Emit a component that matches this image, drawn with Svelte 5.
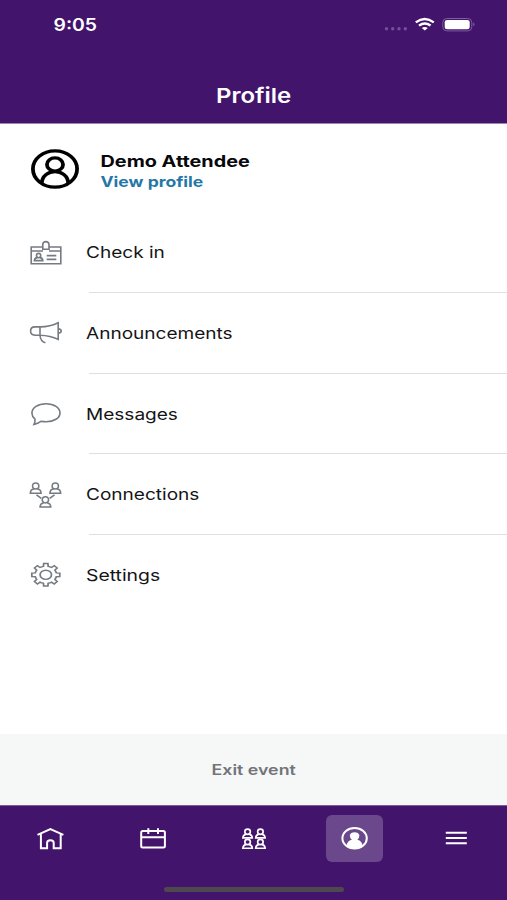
<script>
  const items = ['Check in', 'Announcements', 'Messages', 'Connections', 'Settings'];

  // Eight-toothed gear outline, centred on the origin
  const teeth = 8;
  const gear = Array.from({ length: teeth }, (_, i) => {
    const a = (i * 2 * Math.PI) / teeth;
    const pt = (r, d) => `${(r * Math.sin(a + d)).toFixed(2)} ${(-r * Math.cos(a + d)).toFixed(2)}`;
    return `${i ? 'L' : 'M'}${pt(8.7, -0.22)}L${pt(11.4, -0.15)}L${pt(11.4, 0.15)}L${pt(8.7, 0.22)}A8.7 8.7 0 0 1 ${pt(8.7, 0.565)}`;
  }).join('') + 'Z';
</script>

{#snippet person(x, y, w, h)}
  <g transform="translate({x} {y}) scale({w / 12} {h / 11})">
    <ellipse cx="0" cy="3.2" rx="3.4" ry="3.2" />
    <path d="M-2.4 5.6v.8Q-5.6 7-5.8 10.8H5.8Q5.6 7 2.4 6.4V5.6" />
  </g>
{/snippet}

<div class="screen">
  <header>
    <div class="status">
      <span class="time"><span class="wide">9:05</span></span>
      <svg width="94" height="18" viewBox="384 15 94 18">
        <g fill="#74509a">
          <circle cx="386.5" cy="28.7" r="1.7" /><circle cx="392.7" cy="28.7" r="1.7" />
          <circle cx="399" cy="28.7" r="1.7" /><circle cx="405.3" cy="28.7" r="1.7" />
        </g>
        <g fill="none" stroke="#fff" stroke-width="2.4">
          <path d="M415.8 22.4Q424.7 15.8 433.8 22.4" />
          <path d="M419 25.6Q424.7 21.4 430.6 25.6" />
        </g>
        <path d="M421.8 28Q424.7 25.8 427.8 28L424.8 30.6Z" fill="#fff" />
        <rect x="442.8" y="18.5" width="29" height="12.4" rx="4" fill="none" stroke="#7d5ca1" />
        <rect x="444.7" y="20" width="25" height="9.2" rx="2.3" fill="#fff" />
        <path d="M473.2 22.4q3 1.9 0 3.8z" fill="#7d5ca1" />
      </svg>
    </div>
    <h1><span class="wide">Profile</span></h1>
  </header>

  <main>
    <div class="profile">
      <svg width="50" height="42" viewBox="30.3 147.7 50 42" fill="none" stroke="#000">
        <g transform="translate(55.3 168.7) scale(1.22 1)" stroke-width="3.1">
          <circle r="18.1" />
          <circle cy="-4.5" r="6.6" />
          <path d="M-10.9 14.5C-10.5-1.4 10.5-1.4 10.9 14.5" />
        </g>
      </svg>
      <div class="who">
        <strong><span class="wide">Demo Attendee</span></strong>
        <a href="#profile"><span class="wide">View profile</span></a>
      </div>
    </div>

    <ul>
      {#each items as item, i}
        <li>
          <svg width="36" height="30" viewBox="28 {[237.4, 318, 398.6, 479.2, 559.8][i]} 36 30" fill="none" stroke="#757b82" stroke-width="1.6">
            {#if i === 0}
              <path d="M43 246.4H31.2V263.2H60.8V246.4H49M31.2 250.4H43M49 250.4H60.8M46.7 255H56.3M46.7 258.8H56.3" />
              <path d="M42.8 248.6V243.8Q43 241 45.9 241T49 243.8V248.6Z" />
              <ellipse cx="38.6" cy="255" rx="2.1" ry="2.2" />
              <path d="M37.4 257Q34.6 257.3 34.4 260H42.8Q42.6 257.3 39.8 257" />
            {:else if i === 1}
              <path d="M40 326.9H35Q30.6 327 30.6 331T35 335.2H40ZM40 326.9Q50.5 326.6 58.2 322.7V339.4Q50.5 335.5 40 335.2M58.2 328.8Q61.2 329 61.2 331T58.2 333.2" />
              <path d="M40 335.2Q40.4 341.4 45.4 342.7" />
            {:else if i === 2}
              <path d="M34 424Q35.3 421.5 35 418.8Q31.9 416 31.9 412.6C32 407.4 38 403.4 46 403.4S60 407.4 60 412.5S54 421.4 46 421.4Q43.4 421.4 41 420.9Q37.8 423.2 34 424Z" />
            {:else if i === 3}
              {@render person(35.7, 482.1, 11.2, 10.5)}
              {@render person(55.3, 482.1, 11.2, 10.5)}
              {@render person(45.4, 496, 11.2, 10.5)}
              <path d="M36.5 494L41.3 497.6M54.5 494L49.7 497.6" />
            {:else}
              <g transform="translate(45.8 574.6) scale(1.24 1)" stroke-width="1.4">
                <path d={gear} /><circle r="4.6" />
              </g>
            {/if}
          </svg>
          <span class="label"><span class="wide">{item}</span></span>
        </li>
      {/each}
    </ul>
  </main>

  <button class="exit"><span class="wide">Exit event</span></button>

  <nav>
    <div class="tabs">
      <div class="tab">
        <svg width="57" height="47" viewBox="22.3 815 57 47">
          <path d="M37.8 834.8L50.7 829.2L63.7 834.8M41.2 833.8V848.2H47.4V842.8Q47.4 840.2 50.7 840.2T54 842.8V848.2H61V833.8" />
        </svg>
      </div>
      <div class="tab">
        <svg width="57" height="47" viewBox="124.2 815 57 47">
          <rect x="141.4" y="831" width="23.7" height="16.5" rx="1.5" />
          <path d="M141.4 837.3H165.1M148.5 828.3V834M158.2 828.3V834" />
        </svg>
      </div>
      <div class="tab">
        <svg width="57" height="47" viewBox="225.2 815 57 47">
          <g class="people">
            {@render person(247.8, 829.1, 9.8, 9)}
            {@render person(260.6, 829.1, 9.8, 9)}
            {@render person(247.8, 839.4, 9.8, 9)}
            {@render person(260.6, 839.4, 9.8, 9)}
          </g>
        </svg>
      </div>
      <div class="tab active">
        <svg width="57" height="47" viewBox="326.2 815 57 47">
          <ellipse cx="354.8" cy="838.2" rx="12.2" ry="10.2" />
          <path class="solid" d="M346.8 845.9Q347 841 352 839.8Q350 838 350 835.5C350.2 831 359.4 831 359.6 835.5Q359.6 838 357.6 839.8Q362.4 841 362.8 845.9Q355 852 346.8 845.9Z" />
        </svg>
      </div>
      <div class="tab">
        <svg width="57" height="47" viewBox="427.9 815 57 47">
          <path d="M445.7 832.8H466.7M445.7 838.1H466.7M445.7 843.2H466.7" />
        </svg>
      </div>
    </div>
    <div class="indicator"></div>
  </nav>
</div>

<style>
  :global(body) { margin: 0; }
  .screen {
    width: 507px; height: 900px; display: flex; flex-direction: column;
    overflow: hidden; background: #fff; color: #141416;
    font-family: Inter, "Liberation Sans", sans-serif;
  }
  .wide { display: inline-block; white-space: nowrap; transform: scaleX(1.19); transform-origin: left; }
  header { height: 124px; flex: none; background: #43146b; color: #fff; border-bottom: 1px solid #9e86b2; box-sizing: border-box; }
  .status { height: 48px; display: flex; justify-content: space-between; align-items: center; padding: 0 29px 0 53px; }
  .time { font-size: 17px; font-weight: 600; padding-top: 2px; }
  .time .wide { transform: translateX(.5px) scaleX(1.14); }
  h1 { margin: 35px 0 0; font-size: 20.5px; line-height: 26px; font-weight: 600; text-align: center; }
  h1 .wide, .exit .wide { transform-origin: center; }
  h1 .wide { transform: translateX(.5px) scaleX(1.17); }
  .exit .wide { transform: translateX(.5px) scaleX(1.27); }
  main { flex: 1; }
  .profile { display: flex; align-items: center; height: 88.6px; padding: 1.2px 0 0 30px; box-sizing: border-box; gap: 20px; }
  .who { display: flex; flex-direction: column; line-height: 20px; padding-top: 5px; }
  strong { font-size: 16px; font-weight: 700; color: #08080a; }
  strong .wide { transform: translateX(.5px) scaleX(1.24); }
  a { font-size: 14.5px; font-weight: 700; color: #2477a6; text-decoration: none; }
  a .wide { transform: translate(.5px, 1px) scaleX(1.21); }
  ul { list-style: none; margin: 0; padding: 0; }
  li { display: flex; align-items: center; height: 80.6px; padding-left: 28px; gap: 22px; }
  li svg { flex: none; }
  .label { flex: 1; margin-left: 3px; height: 100%; box-sizing: border-box; display: flex; align-items: center; font-size: 16px; border-bottom: 1.5px solid #dedfe0; }
  .label .wide { margin-left: -3px; }
  li:last-child .wide { transform: scaleX(1.21); }
  li:last-child .label { border-color: transparent; }
  .exit { height: 71px; flex: none; border: 0; padding: 0; background: #f6f7f7; color: #72747a; font: 600 14px Inter, "Liberation Sans", sans-serif; }
  nav { height: 95px; flex: none; box-sizing: border-box; background: #43146b; border-top: 1px solid #7f5c99; }
  .tabs { display: flex; justify-content: space-between; padding: 9px 22.3px 0; }
  .tab { width: 57px; height: 47px; border-radius: 6px; }
  .tab.active { background: #6b478b; }
  .tab svg { display: block; fill: none; stroke: #fff; stroke-width: 2; }
  .tab svg .people { stroke-width: 2; }
  .tab svg .solid { fill: #fff; stroke: none; }
  .indicator { width: 180px; height: 5px; margin: 25px 0 0 164px; border-radius: 3px; background: #4d494e; }
</style>
